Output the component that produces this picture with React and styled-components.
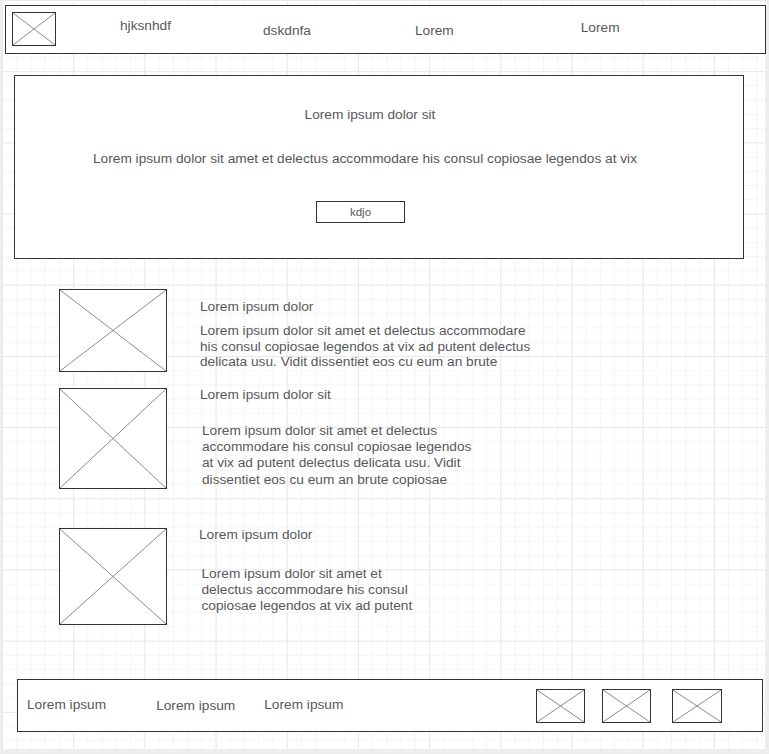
import React from 'react';
import styled, { createGlobalStyle } from 'styled-components';

const GlobalStyle = createGlobalStyle`
  html, body { margin: 0; padding: 0; background: #eeeeee; }
  body { font-family: "Liberation Sans", Arial, sans-serif; }
`;

const Canvas = styled.div`
  box-sizing: border-box;
  margin-left: 2px;
  width: 763px;
  height: 749px;
  background-color: #ffffff;
  background-image:
    linear-gradient(to right, #e9e9e9 1px, transparent 1px),
    linear-gradient(to bottom, #e9e9e9 1px, transparent 1px),
    linear-gradient(to right, #f5f5f5 1px, transparent 1px),
    linear-gradient(to bottom, #f5f5f5 1px, transparent 1px);
  background-size: 71.2px 71.2px, 71.2px 71.2px, 14.24px 14.24px, 14.24px 14.24px;
  display: flow-root;
  color: #585858;
  font-size: 13.7px;
`;

const Placeholder = styled.div`
  box-sizing: border-box;
  flex: none;
  width: ${(p) => p.$w}px;
  height: ${(p) => p.$h}px;
  border: 1px solid #333;
  background: #fff;
  svg { display: block; width: 100%; height: 100%; }
`;

const ImageBox = ({ w, h }) => (
  <Placeholder $w={w} $h={h}>
    <svg viewBox="0 0 100 100" preserveAspectRatio="none">
      <line x1="0" y1="0" x2="100" y2="100" stroke="#8a8a8a" strokeWidth="1" vectorEffect="non-scaling-stroke" />
      <line x1="100" y1="0" x2="0" y2="100" stroke="#8a8a8a" strokeWidth="1" vectorEffect="non-scaling-stroke" />
    </svg>
  </Placeholder>
);

const Header = styled.header`
  box-sizing: border-box;
  margin: 5px 0 0 3px;
  width: 761px;
  height: 49px;
  border: 1px solid #333;
  background: #fff;
  display: flex;
  align-items: flex-start;
  padding: 6px;
`;

const NavItem = styled.span`
  margin-left: ${(p) => p.$ml}px;
  margin-top: ${(p) => p.$mt}px;
  line-height: 16px;
  white-space: nowrap;
`;

const Hero = styled.section`
  box-sizing: border-box;
  margin: 21px 0 0 12px;
  width: 730px;
  height: 184px;
  border: 1px solid #333;
  background: #fff;
  display: flex;
  flex-direction: column;
  align-items: center;
  padding-top: 31px;
`;

const HeroLine = styled.p`
  margin: ${(p) => p.$mt}px ${(p) => p.$shift}px 0 0;
  line-height: 16px;
  white-space: nowrap;
`;

const Button = styled.button`
  box-sizing: border-box;
  margin: 34px 37px 0 0;
  width: 89px;
  height: 22px;
  border: 1px solid #333;
  background: #fff;
  color: #585858;
  font-family: "Liberation Sans", Arial, sans-serif;
  font-size: 11.5px;
  padding: 0;
`;

const CardList = styled.div`
  margin: 30px 0 0 57px;
  display: flex;
  flex-direction: column;
`;

const Card = styled.article`
  display: flex;
  align-items: flex-start;
  gap: 33px;
  margin-top: ${(p) => p.$mt}px;
`;

const CardBody = styled.div`
  display: flex;
  flex-direction: column;
`;

const CardTitle = styled.h3`
  margin: ${(p) => p.$mt}px 0 0 ${(p) => p.$ml || 0}px;
  font-size: 13.7px;
  font-weight: normal;
  line-height: 16px;
  white-space: nowrap;
`;

const CardText = styled.p`
  margin: ${(p) => p.$mt}px 0 0 ${(p) => p.$ml}px;
  line-height: ${(p) => p.$lh}px;
  white-space: nowrap;
  span { display: block; }
`;

const Footer = styled.footer`
  box-sizing: border-box;
  margin: 53.6px 0 0 15px;
  width: 746px;
  height: 53px;
  border: 1px solid #333;
  background: #fff;
  display: flex;
  align-items: center;
  padding: 0 40px 0 0;
`;

const FootLink = styled.span`
  margin-left: ${(p) => p.$ml}px;
  margin-top: ${(p) => p.$mt}px;
  line-height: 16px;
  white-space: nowrap;
`;

const FootIcons = styled.div`
  margin-left: auto;
  margin-top: 1px;
  display: flex;
  align-items: center;
`;

const IconSlot = styled.div`
  margin-left: ${(p) => p.$ml}px;
`;

const cards = [
  {
    h: 83, mt: 0, title: 'Lorem ipsum dolor', tmt: 10, tml: 0, pmt: 8, pml: 0, lh: 15.5,
    lines: [
      'Lorem ipsum dolor sit amet et delectus accommodare',
      'his consul copiosae legendos at vix ad putent delectus',
      'delicata usu. Vidit dissentiet eos cu eum an brute',
    ],
  },
  {
    h: 101, mt: 16, title: 'Lorem ipsum dolor sit', tmt: -1, tml: 0, pmt: 20, pml: 2, lh: 16.2,
    lines: [
      'Lorem ipsum dolor sit amet et delectus',
      'accommodare his consul copiosae legendos',
      'at vix ad putent delectus delicata usu. Vidit',
      'dissentiet eos cu eum an brute copiosae',
    ],
  },
  {
    h: 97, mt: 39, title: 'Lorem ipsum dolor', tmt: -1, tml: -1, pmt: 22.6, pml: 1.5, lh: 16,
    lines: [
      'Lorem ipsum dolor sit amet et',
      'delectus accommodare his consul',
      'copiosae legendos at vix ad putent',
    ],
  },
];

export default function App() {
  return (
    <>
      <GlobalStyle />
      <Canvas>
        <Header>
          <ImageBox w={44} h={34} />
          <NavItem $ml={64} $mt={6}>hjksnhdf</NavItem>
          <NavItem $ml={92} $mt={11}>dskdnfa</NavItem>
          <NavItem $ml={104} $mt={11}>Lorem</NavItem>
          <NavItem $ml={127} $mt={8}>Lorem</NavItem>
        </Header>

        <Hero>
          <HeroLine $mt={0} $shift={18}>Lorem ipsum dolor sit</HeroLine>
          <HeroLine $mt={28} $shift={28}>
            Lorem ipsum dolor sit amet et delectus accommodare his consul copiosae legendos at vix
          </HeroLine>
          <Button>kdjo</Button>
        </Hero>

        <CardList>
          {cards.map((c, i) => (
            <Card key={i} $mt={c.mt}>
              <ImageBox w={108} h={c.h} />
              <CardBody>
                <CardTitle $mt={c.tmt} $ml={c.tml}>{c.title}</CardTitle>
                <CardText $mt={c.pmt} $ml={c.pml} $lh={c.lh}>
                  {c.lines.map((l, j) => (
                    <span key={j}>{l}</span>
                  ))}
                </CardText>
              </CardBody>
            </Card>
          ))}
        </CardList>

        <Footer>
          <FootLink $ml={9} $mt={0}>Lorem ipsum</FootLink>
          <FootLink $ml={50} $mt={2}>Lorem ipsum</FootLink>
          <FootLink $ml={29} $mt={0}>Lorem ipsum</FootLink>
          <FootIcons>
            <IconSlot $ml={0}><ImageBox w={49} h={34} /></IconSlot>
            <IconSlot $ml={17}><ImageBox w={49} h={34} /></IconSlot>
            <IconSlot $ml={21}><ImageBox w={50} h={34} /></IconSlot>
          </FootIcons>
        </Footer>
      </Canvas>
    </>
  );
}
